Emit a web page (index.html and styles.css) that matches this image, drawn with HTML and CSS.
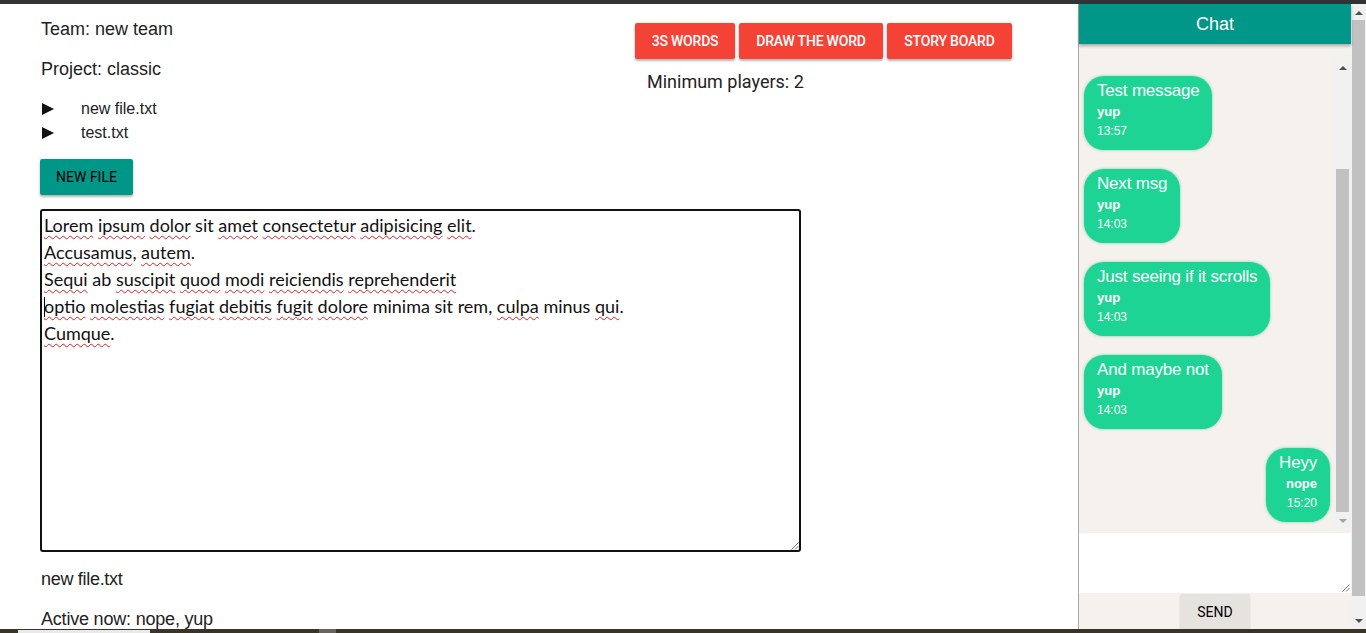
FILE: index.html
```html
<!DOCTYPE html>
<html>
<head>
<meta charset="utf-8">
<title>Team</title>
<link rel="stylesheet" href="styles.css">
</head>
<body>
<div class="topbar"></div>
<div class="frame">
  <div class="viewport">
    <div class="main">
      <div class="top">
        <div class="info">
          <p class="team">Team: new team</p>
          <p class="project">Project: classic</p>
          <ul class="files">
            <li><span class="tri"></span><span class="fname">new file.txt</span></li>
            <li><span class="tri"></span><span class="fname">test.txt</span></li>
          </ul>
          <button class="btn btn-teal">NEW FILE</button>
        </div>
        <div class="games">
          <div class="game-btns">
            <button class="btn btn-red">3S WORDS</button>
            <button class="btn btn-red">DRAW THE WORD</button>
            <button class="btn btn-red">STORY BOARD</button>
          </div>
          <p class="minplayers">Minimum players: 2</p>
        </div>
      </div>
      <div class="editor">
        <div class="editor-text"><span class="sp">Lorem</span> <span class="sp">ipsum</span> <span class="sp">dolor</span> sit <span class="sp">amet</span> <span class="sp">consectetur</span> <span class="sp">adipisicing</span> <span class="sp">elit</span>.<br><span class="sp">Accusamus</span>, <span class="sp">autem</span>.<br><span class="sp">Sequi</span> ab <span class="sp">suscipit</span> <span class="sp">quod</span> <span class="sp">modi</span> <span class="sp">reiciendis</span> <span class="sp">reprehenderit</span><br><span class="caret"></span><span class="sp">optio</span> <span class="sp">molestias</span> <span class="sp">fugiat</span> <span class="sp">debitis</span> <span class="sp">fugit</span> <span class="sp">dolore</span> minima sit rem, <span class="sp">culpa</span> minus <span class="sp">qui</span>.<br><span class="sp">Cumque</span>.</div>
        <svg class="grip" width="9" height="9" viewBox="0 0 9 9"><path d="M8.5 1.5 L1.5 8.5 M8.5 5 L5 8.5" stroke="#777" stroke-width="1"/></svg>
      </div>
      <p class="curfile">new file.txt</p>
      <p class="active">Active now: nope, yup</p>
    </div>
    <div class="chat">
      <div class="chat-head">Chat</div>
      <div class="chat-body">
        <div class="msgs-wrap">
          <div class="msgs">
            <div class="msg"><div class="m-text">Test message</div><div class="m-user">yup</div><div class="m-time">13:57</div></div>
            <div class="msg"><div class="m-text">Next msg</div><div class="m-user">yup</div><div class="m-time">14:03</div></div>
            <div class="msg"><div class="m-text">Just seeing if it scrolls</div><div class="m-user">yup</div><div class="m-time">14:03</div></div>
            <div class="msg"><div class="m-text">And maybe not</div><div class="m-user">yup</div><div class="m-time">14:03</div></div>
            <div class="msg mine"><div class="m-text">Heyy</div><div class="m-user">nope</div><div class="m-time">15:20</div></div>
          </div>
          <div class="vscroll inner">
            <div class="arrow up dark"></div>
            <div class="track"><div class="thumb"></div></div>
            <div class="arrow down light"></div>
          </div>
        </div>
      </div>
      <div class="chat-input">
        <svg class="grip2" width="9" height="9" viewBox="0 0 9 9"><path d="M8.5 1.5 L1.5 8.5 M8.5 5 L5 8.5" stroke="#777" stroke-width="1"/></svg>
      </div>
      <div class="chat-send"><button class="btn send">SEND</button></div>
    </div>
  </div>
  <div class="vscroll outer">
    <div class="arrow up dark"></div>
    <div class="track"><div class="thumb"></div></div>
    <div class="arrow down dark"></div>
  </div>
</div>
<div class="bottombar"><span class="seg1"></span><span class="seg2"></span></div>
</body>
</html>
```

FILE: styles.css
```css
* { box-sizing: border-box; }
html, body { margin: 0; padding: 0; }
body {
  width: 1366px;
  height: 633px;
  overflow: hidden;
  background: #fff;
  font-family: "Liberation Sans", Arial, sans-serif;
  color: #222;
}
.topbar { height: 4px; background: #323335; }
.bottombar {
  height: 4px;
  background: #3a3328;
  display: flex;
  align-items: flex-end;
}
.seg1 { margin-left: 18px; width: 132px; height: 3px; background: #e9e9e9; }
.seg2 { margin-left: 169px; width: 17px; height: 4px; background: #6b645a; }
.frame { display: flex; height: 625px; }
.viewport { flex: 1; display: flex; }

/* main */
.main { flex: 1; padding-left: 40px; }
.top { display: flex; }
.info { width: 595px; }
p { margin: 0; }
.team, .project {
  font-size: 18px;
  line-height: 20px;
  padding-left: 1px;
}
.team { margin-top: 15px; }
.project { margin-top: 20px; }
.files {
  list-style: none;
  margin: 18px 0 0;
  padding: 0;
  font-size: 16px;
  line-height: 24px;
}
.files li { display: flex; align-items: center; }
.tri {
  width: 0; height: 0;
  margin-left: 2px;
  border-left: 12px solid #111;
  border-top: 6px solid transparent;
  border-bottom: 6px solid transparent;
}
.fname { margin-left: 27px; }
.btn {
  font-family: Roboto, "Liberation Sans", sans-serif;
  font-weight: 500;
  font-size: 14px;
  height: 36px;
  padding: 0;
  border: none;
  border-radius: 2px;
  white-space: nowrap;
  box-shadow: 0 2px 2px rgba(0,0,0,0.22), 0 1px 4px rgba(0,0,0,0.12);
  cursor: pointer;
}
.btn-teal { margin-top: 14px; background: #009688; color: #000; width: 93px; font-weight: 400; }
.games { margin-top: 19px; }
.game-btns { display: flex; gap: 4px; }
.btn-red { background: #f44336; color: #fff; letter-spacing: -0.2px; }
.btn-red:nth-child(1) { width: 100px; }
.btn-red:nth-child(2) { width: 144px; }
.btn-red:nth-child(3) { width: 125px; }
.minplayers {
  font-family: Roboto, "Liberation Sans", sans-serif;
  font-size: 18px;
  line-height: 22px;
  margin-top: 12px;
  padding-left: 12px;
}
.editor {
  position: relative;
  margin-top: 14px;
  width: 761px;
  height: 343px;
  border: 2px solid #111;
  border-radius: 3px;
}
.editor-text {
  padding: 1px 2px;
  font-family: Lato, "Liberation Sans", sans-serif;
  font-size: 18px;
  line-height: 27px;
  color: #111;
}
.sp {
  text-decoration: underline wavy #e02020;
  text-decoration-thickness: 1px;
  text-underline-offset: 3px;
}
.caret {
  display: inline-block;
  width: 1px;
  height: 20px;
  background: #000;
  margin-right: -1px;
  vertical-align: -4px;
}
.grip { position: absolute; right: 0; bottom: 0; }
.curfile {
  margin-top: 17px;
  font-size: 18px;
  line-height: 20px;
  padding-left: 1px;
  letter-spacing: -0.3px;
}
.active {
  margin-top: 20px;
  font-size: 18px;
  line-height: 20px;
  padding-left: 1px;
  letter-spacing: -0.2px;
}

/* chat */
.chat {
  width: 273px;
  border-left: 1px solid #a8a8a8;
  display: flex;
  flex-direction: column;
  background: #f5f1ec;
}
.chat-head {
  height: 40px;
  background: #009688;
  color: #fff;
  font-size: 18px;
  line-height: 40px;
  text-align: center;
  box-shadow: 0 2px 3px rgba(0,0,0,0.3);
  position: relative;
  z-index: 1;
}
.chat-body {
  height: 489px;
  padding: 15px 0 4px;
}
.msgs-wrap { display: flex; height: 470px; }
.msgs {
  flex: 1;
  overflow: hidden;
  padding: 17px 4px 0 5px;
  display: flex;
  flex-direction: column;
  align-items: flex-start;
  gap: 19px;
}
.msg {
  background: #1ed494;
  color: #fff;
  border-radius: 20px;
  padding: 5px 13px 10px 13px;
  box-shadow: 0 0 3px rgba(30, 180, 130, 0.6);
}
.msg.mine { align-self: flex-end; text-align: right; padding: 5px 13px 10px 13px; }
.m-text { font-size: 17px; line-height: 20px; letter-spacing: -0.2px; }
.m-user { font-size: 13px; font-weight: bold; line-height: 22px; }
.m-time { font-size: 12px; line-height: 17px; }
.chat-input {
  height: 60px;
  background: #fff;
  position: relative;
}
.grip2 { position: absolute; right: 1px; bottom: 1px; }
.chat-send {
  flex: 1;
  display: flex;
  justify-content: center;
  padding-top: 1px;
  overflow: hidden;
}
.send {
  background: #e6e3de;
  color: #000;
  width: 70px;
  font-weight: 400;
  box-shadow: 0 1px 2px rgba(0,0,0,0.12);
  flex: none;
}

/* fake scrollbars */
.vscroll {
  display: flex;
  flex-direction: column;
  background: #f1f1f1;
}
.vscroll.inner { width: 17px; }
.vscroll.outer { width: 15px; }
.arrow { height: 17px; display: flex; justify-content: center; align-items: center; }
.arrow::before {
  content: "";
  width: 0; height: 0;
  border-left: 4px solid transparent;
  border-right: 4px solid transparent;
}
.arrow.up::before { border-bottom: 4px solid #505050; }
.arrow.down::before { border-top: 4px solid #505050; }
.arrow.down.light::before { border-top-color: #a3a3a3; }
.track { flex: 1; position: relative; }
.inner .track { padding: 93px 2px 0; }
.inner .thumb { height: 343px; background: #c1c1c1; }
.outer .track { padding: 0 1px 0 1px; }
.outer .thumb { height: 576px; background: #c1c1c1; margin-top: -1px; }
```
